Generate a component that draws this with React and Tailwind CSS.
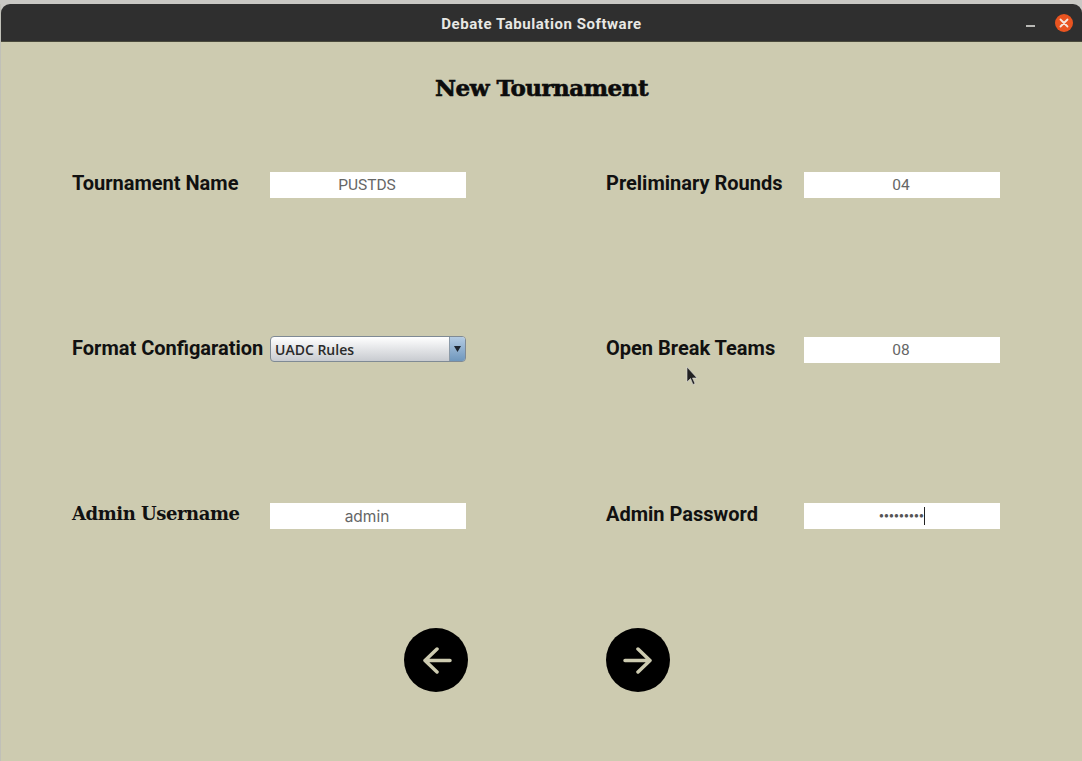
const roboto = 'font-["Roboto",sans-serif]';

function Field({ label, children, slab, className = '' }) {
  return (
    <div className={`flex items-center h-[26px] ${className}`}>
      <div
        className={`w-[198px] shrink-0 whitespace-nowrap text-[#111] ${
          slab
            ? '-mt-[5px] font-["DejaVu_Serif",serif] font-bold text-[18px] tracking-[-0.45px]'
            : `-mt-[4px] ${roboto} font-bold text-[20px]`
        }`}
      >
        {label}
      </div>
      {children}
    </div>
  );
}

function TextBox({ value, font = `${roboto} text-[15.5px]` }) {
  return (
    <div className={`w-[196px] h-[26px] bg-white flex items-center justify-center pt-px pr-[2px] text-[#666] ${font}`}>
      {value}
    </div>
  );
}

function FormatSelect() {
  return (
    <div className="w-[196px] h-[26px] -translate-y-px flex rounded-[4px] border border-[#7f8a94] overflow-hidden bg-gradient-to-b from-white to-[#c8cbd0]">
      <div className='flex-1 pl-[4px] flex items-center font-["Open_Sans",sans-serif] font-semibold text-[14px] text-[#2a2a2a]'>
        UADC Rules
      </div>
      <div className="w-[16px] flex items-center justify-center bg-gradient-to-b from-[#b4cbe2] to-[#6f97bd] border-l border-[#8b9aa8]">
        <svg width="7" height="6" viewBox="0 0 7 6">
          <path d="M0 0h7L3.5 6z" fill="#1d2530" />
        </svg>
      </div>
    </div>
  );
}

function RoundButton({ dir }) {
  return (
    <div className="w-16 h-16 rounded-full bg-black flex items-center justify-center text-[#cdcbb0]">
      <svg
        width="30"
        height="27"
        viewBox="0 0 30 27"
        fill="none"
        stroke="currentColor"
        strokeWidth="3.5"
        strokeLinecap="round"
        strokeLinejoin="round"
        className={dir === 'left' ? 'ml-[2px]' : '-ml-px'}
      >
        {dir === 'left' ? (
          <path d="M28 13.5H3M15 2 3 13.5 15 25" />
        ) : (
          <path d="M2 13.5h25M15 2l12 11.5L15 25" />
        )}
      </svg>
    </div>
  );
}

export default function App() {
  return (
    <div className="relative w-[1082px] h-[761px] overflow-hidden bg-[#c9c8c4] pt-[4px]">
      <div className="h-[757px] flex flex-col border-l border-[#c0c0b8]">
        <div className="relative h-[37px] shrink-0 bg-[#2f2f2f] rounded-t-[9px] flex items-center justify-center">
          <span className={`${roboto} font-bold text-[15px] tracking-[0.55px] text-[#e8e8e4] mt-[3px]`}>
            Debate Tabulation Software
          </span>
          <div className="absolute left-[1025px] top-[21px] w-[9px] h-[1.5px] bg-[#b9b9b6]" />
          <div className="absolute left-[1054px] top-[10px] w-[18px] h-[18px] rounded-full bg-[#e95420] flex items-center justify-center">
            <svg width="10" height="10" viewBox="0 0 10 10" stroke="#f6e6dc" strokeWidth="1.8" strokeLinecap="round">
              <path d="M1.5 1.5l7 7M8.5 1.5l-7 7" />
            </svg>
          </div>
        </div>

        <div className="flex-1 bg-[#cdcbb0] border-t border-[#4a4a3c] flex flex-col">
          <h1 className='text-center font-["DejaVu_Serif",serif] font-bold text-[23px] leading-[30px] tracking-[-0.5px] text-[#0c0c0c] [-webkit-text-stroke:0.6px_#0c0c0c] mt-[31px]'>
            New Tournament
          </h1>

          <div className="grid grid-cols-[396px_396px] gap-x-[138px] gap-y-[139px] pl-[71px] mt-[69px]">
            <Field label="Tournament Name"><TextBox value="PUSTDS" /></Field>
            <Field label="Preliminary Rounds"><TextBox value="04" /></Field>
            <Field label="Format Configaration"><FormatSelect /></Field>
            <Field label="Open Break Teams"><TextBox value="08" /></Field>
            <Field label="Admin Username" slab className="mt-px">
              <TextBox value="admin" font='font-["Inter",sans-serif] text-[15.5px]' />
            </Field>
            <Field label="Admin Password" className="mt-px">
              <div className="w-[196px] h-[26px] bg-white flex items-center justify-center">
                <span className='font-["Liberation_Sans",sans-serif] font-bold text-[8px] tracking-[0.15px] text-[#555]'>
                  ●●●●●●●●●
                </span>
                <span className="w-px h-[18px] bg-[#222]" />
              </div>
            </Field>
          </div>

          <div className="flex gap-[138px] pl-[403px] mt-[99px]">
            <RoundButton dir="left" />
            <RoundButton dir="right" />
          </div>
        </div>
      </div>

      {/* mouse pointer caught in the capture */}
      <svg className="absolute left-[686px] top-[366px]" width="12" height="20" viewBox="0 0 12 20">
        <path d="M1 1v15l3.5-3.5 2.5 6 2-1-2.5-5.5H11z" fill="#222" stroke="#ddd" strokeWidth="0.6" />
      </svg>
    </div>
  );
}
